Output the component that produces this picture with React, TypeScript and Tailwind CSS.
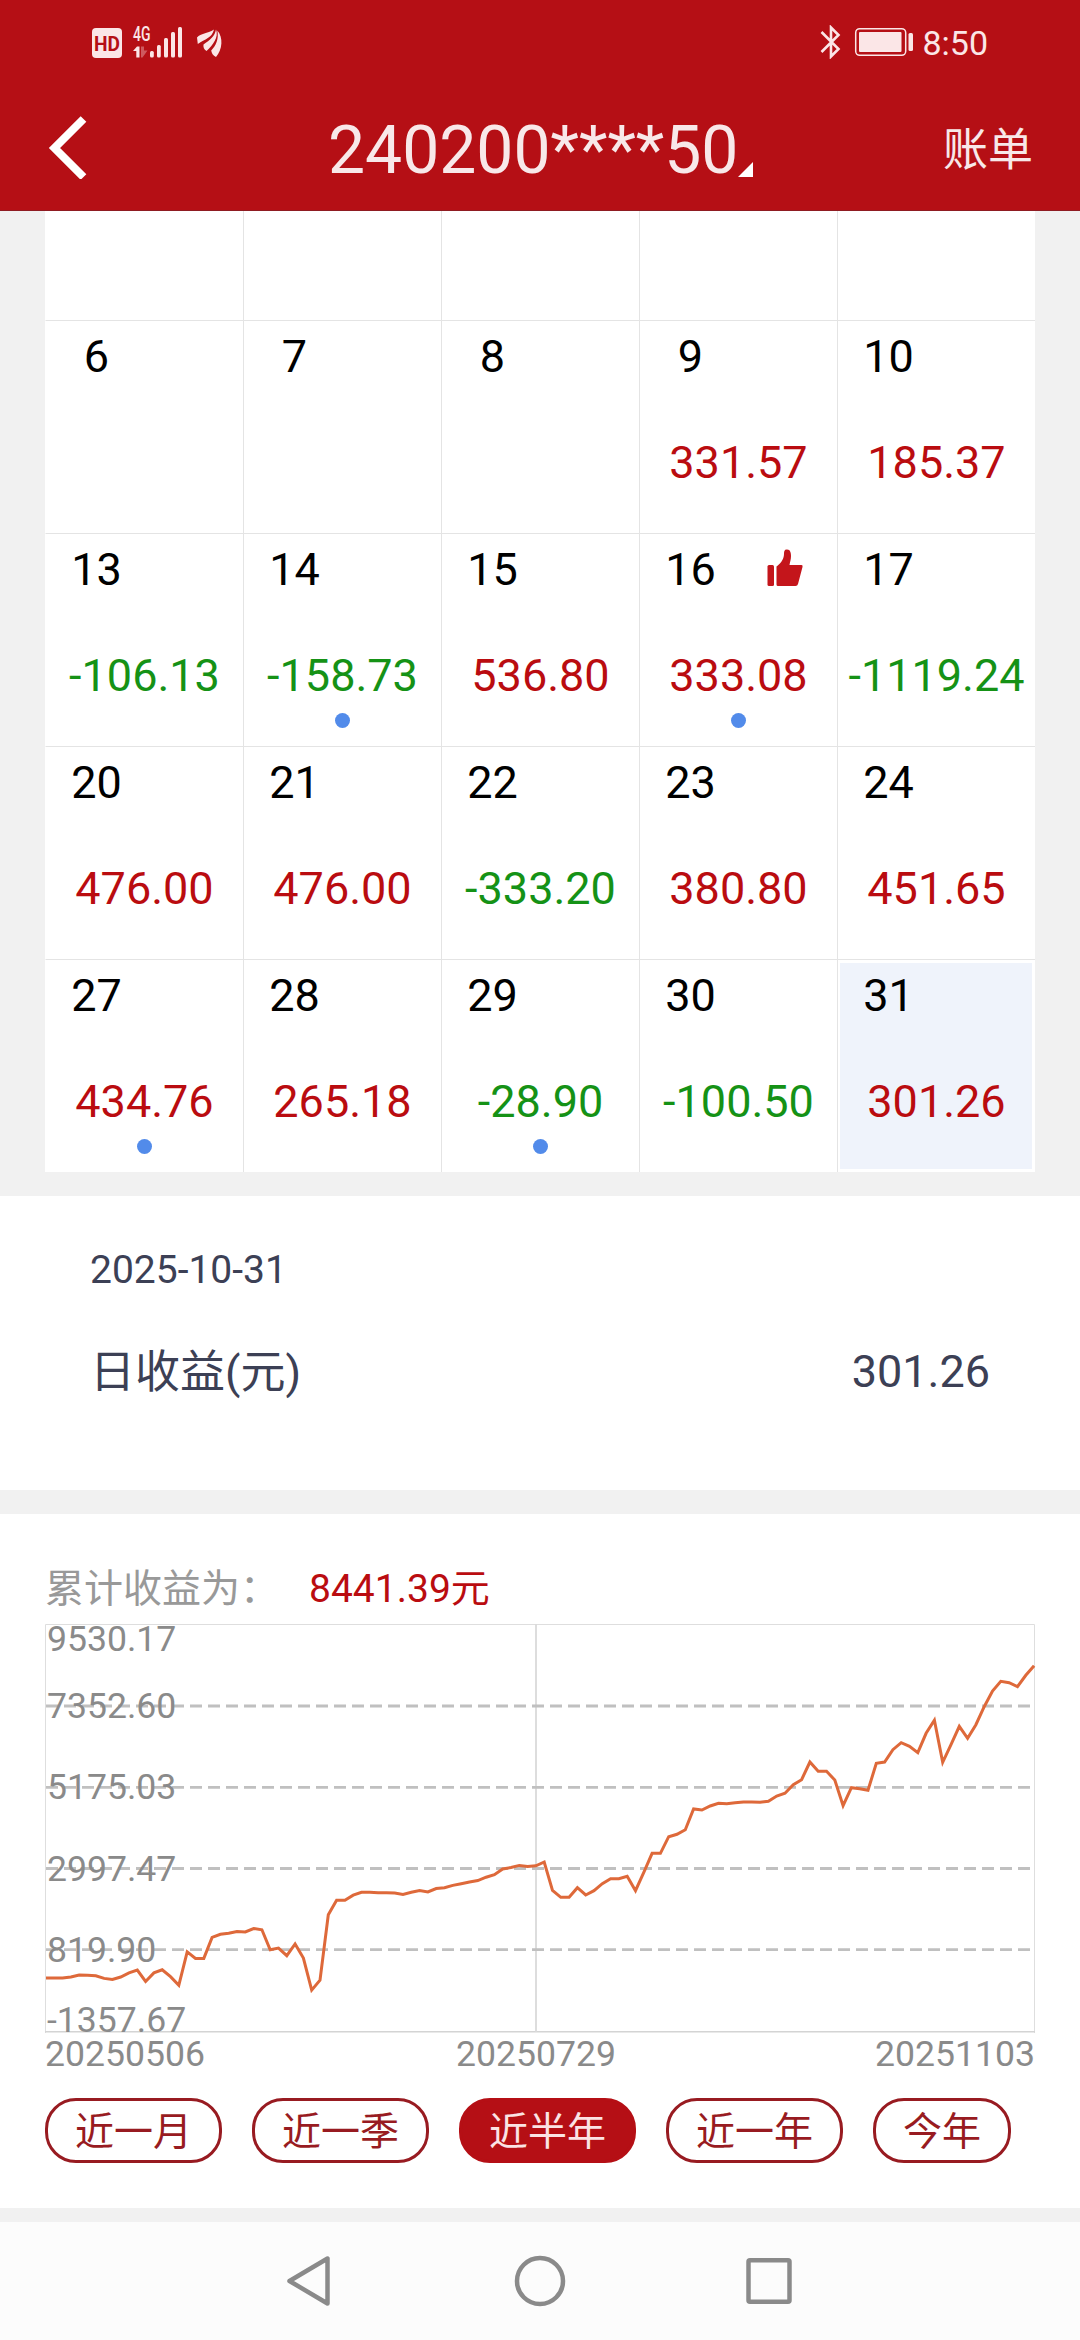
import React, { useState } from 'react';
import clsx from 'clsx';

interface Day {
  date: number;
  amount?: string;
  dot?: boolean;
  best?: boolean;
}

const days: Day[] = [
  { date: 6 },
  { date: 7 },
  { date: 8 },
  { date: 9, amount: '331.57' },
  { date: 10, amount: '185.37' },
  { date: 13, amount: '-106.13' },
  { date: 14, amount: '-158.73', dot: true },
  { date: 15, amount: '536.80' },
  { date: 16, amount: '333.08', dot: true, best: true },
  { date: 17, amount: '-1119.24' },
  { date: 20, amount: '476.00' },
  { date: 21, amount: '476.00' },
  { date: 22, amount: '-333.20' },
  { date: 23, amount: '380.80' },
  { date: 24, amount: '451.65' },
  { date: 27, amount: '434.76', dot: true },
  { date: 28, amount: '265.18' },
  { date: 29, amount: '-28.90', dot: true },
  { date: 30, amount: '-100.50' },
  { date: 31, amount: '301.26' },
];

const ranges = ['近一月', '近一季', '近半年', '近一年', '今年'];

// y position of each trading day on the chart, evenly spaced on x
const series = [
  354.1, 354.1, 354.1, 353, 351, 351.3, 351.7, 354.4, 355.4, 353, 348.9, 346.1, 357.5, 348.9, 345.8,
  352.7, 361.3, 327.9, 334.4, 334.4, 313.4, 310.3, 309.3, 307.6, 307.9, 304.5, 305.8, 325.8, 324.1,
  331.7, 320, 334.1, 366.1, 356.1, 290.7, 276.2, 276.2, 271.1, 268.3, 268.3, 268.7, 268.8, 269, 270.4,
  268.3, 266.6, 268, 264.5, 263.8, 261.4, 259.7, 258, 256.6, 253.2, 250.7, 244.9, 243.5, 241.4, 242.5,
  241.8, 238, 266.3, 273.3, 273.3, 263.7, 271, 266.7, 259.7, 254.7, 254.7, 252.3, 266.7, 248.3, 229.3,
  229.3, 212.7, 210.3, 205.7, 185, 186, 182, 179.3, 179.7, 178.8, 178, 178, 178.3, 177.3, 172, 169.3,
  160.7, 155.7, 138, 147.3, 147.3, 156, 181.7, 163.7, 164.7, 166.3, 139.3, 138, 125.7, 118.7, 122.3,
  128.7, 109.3, 96.3, 138.3, 120.7, 102.3, 114.3, 100.7, 82.7, 67, 57.3, 58.7, 62.7, 51.3, 41.7,
];

const axisLabels = [
  { text: '9530.17', y: 26.5 },
  { text: '7352.60', y: 93.5 },
  { text: '5175.03', y: 175 },
  { text: '2997.47', y: 256.5 },
  { text: '819.90', y: 337.5 },
  { text: '-1357.67', y: 407.5 },
];

const StatusBar: React.FC = () => (
  <div className="flex h-[84px] items-center justify-between px-[92px] text-[#fbe6e7]">
    <svg className="overflow-visible" width="132" height="34" viewBox="0 0 132 34" fill="currentColor">
      <rect x="0" y="3" width="30" height="30" rx="4" />
      <text x="15" y="25.500" fontSize="21" fontWeight="700" textAnchor="middle" textLength="26" lengthAdjust="spacingAndGlyphs" fill="#b50f15">HD</text>
      <text x="41" y="15.800" fontSize="20" fontWeight="500" textLength="17.500" lengthAdjust="spacingAndGlyphs">4G</text>
      <path d="M41 26L45 21.500H47.500V32.500H44.300V26Z" />
      <path d="M49 21.500H52V25.500H55.500L50.500 32.500H49Z" opacity="0.35" />
      <rect x="58" y="26" width="3.800" height="6.500" rx="1.500" />
      <rect x="65" y="20" width="3.800" height="12.500" rx="1.500" />
      <rect x="72" y="13" width="4" height="19.500" rx="1.500" />
      <rect x="79" y="7" width="4" height="25.500" rx="1.500" />
      <rect x="86" y="2" width="4" height="30.500" rx="1.500" />
      <path d="M105 12.500C109 8 115 9 122 4.500C120 13 113 14 105.800 19Z" />
      <path d="M111.500 19.500C118 15 123 11 124 4.500C127 12 121 20 114.500 26C112 24.500 111 22 111.500 19.500Z" />
      <path d="M125.300 5.500C131.500 12 130.500 25 124 32C121 30.500 119.500 28 119.200 25.500C124 20.500 127 14 125.300 5.500Z" />
    </svg>
    <div className="flex items-center">
      <svg width="94" height="34" viewBox="0 0 94 34" fill="none" stroke="currentColor">
        <path d="M1.500 7L18.500 24L11 31.500V2.500L18.500 10L1.500 27" strokeWidth="2.600" />
        <rect x="35.700" y="3.700" width="50" height="26.600" rx="4" strokeWidth="1.500" />
        <rect x="39" y="7" width="42.500" height="20" rx="1" fill="currentColor" stroke="none" />
        <rect x="88.500" y="8" width="4.500" height="18" rx="1.500" fill="currentColor" stroke="none" />
      </svg>
      <span className="ml-2 mt-0.5 text-[34px] leading-none">8:50</span>
    </div>
  </div>
);

const DayCell: React.FC<{ day: Day; first: boolean; selected: boolean; onSelect: () => void }> = ({
  day,
  first,
  selected,
  onSelect,
}) => (
  <div
    onClick={onSelect}
    className={clsx(
      'h-[213px] border-l border-t border-t-[#e4e4e4] bg-white pb-[3px] pl-[2px] pr-[3px] pt-[3px]',
      first ? 'border-l-white' : 'border-l-[#e4e4e4]'
    )}
  >
    <div className={clsx('flex h-full flex-col', selected && 'bg-[#eff3fb]')}>
      <div className="flex h-[60px] items-center pt-[6px]">
        <span className="w-[97px] text-center text-black">{day.date}</span>
        {day.best && (
          <svg className="mb-[6px] ml-[28px]" width="36" height="37" viewBox="0 0 36 37" fill="#c4151b">
            <rect x="0.500" y="16" width="6.500" height="21" rx="1.500" />
            <path d="M9.500 17.500C13 15 17 10.500 17 5C17 1 18.500 0.500 20 0.500C23.500 0.500 24 4 24 7C24 10.500 23 13 22.500 16H34.500Q36 16 35.500 18L31 35Q30.500 37 28.500 37H11Q9.500 37 9.500 35.500Z" />
          </svg>
        )}
      </div>
      <div
        className={clsx(
          'mt-[53px] h-[52px] pl-px text-center leading-[52px]',
          day.amount?.startsWith('-') ? 'text-[#159216]' : 'text-[#ba0c10]'
        )}
      >
        {day.amount}
      </div>
      {day.dot && <div className="mx-auto mt-[11px] h-[15px] w-[15px] rounded-full bg-[#528bea]" />}
    </div>
  </div>
);

const ProfitChart: React.FC = () => (
  <svg className="block overflow-visible" width="990" height="409" viewBox="0 0 990 409">
    <path d="M0.500 409V0.500H989.500V409" fill="none" stroke="#dedede" />
    <path d="M0 407.800H990" stroke="#d4d4d4" strokeWidth="1.500" />
    <path d="M491 0V408" stroke="#dadada" strokeWidth="1.800" />
    {[82, 163.3, 244.5, 325.6].map((y) => (
      <path key={y} d={`M1 ${y}H989`} stroke="#c0c0c0" strokeWidth="2.800" strokeDasharray="12 6" />
    ))}
    {axisLabels.map((label) => (
      <text key={label.text} x="2" y={label.y} fontSize="35.600" fill="#8a8a8a">
        {label.text}
      </text>
    ))}
    <polyline
      points={series.map((y, i) => `${(1 + i * 8.303).toFixed(1)},${y}`).join(' ')}
      fill="none"
      stroke="#de693a"
      strokeWidth="3"
    />
  </svg>
);

const App: React.FC = () => {
  const [selectedDate, setSelectedDate] = useState<number>(31);
  const [range, setRange] = useState<string>('近半年');

  const selected = days.find((day) => day.date === selectedDate);

  return (
    <div className="flex h-[2340px] w-[1080px] flex-col overflow-hidden bg-[#f1f1f1] font-[Roboto,'Noto_Sans_CJK_SC',sans-serif]">
      <header className="h-[211px] shrink-0 border-b border-[#8f1c22] bg-[#b50f15]">
        <StatusBar />
        <div className="flex h-[126px] items-center text-[#f8e8e9]">
          <div className="flex w-[328px] pl-[48px]">
            <svg width="40" height="64" viewBox="0 0 40 64" fill="none" stroke="#fff" strokeWidth="8">
              <path d="M35.500 4L6.500 33L35.500 62" />
            </svg>
          </div>
          <div className="flex items-end pt-[8px]">
            <span className="text-[66px] leading-[78px]">240200****50</span>
            <svg className="mb-[13px]" width="15" height="15" viewBox="0 0 15 15" fill="#fff">
              <path d="M15 0V15H0Z" />
            </svg>
          </div>
          <span className="ml-auto mr-[47px] pt-[6px] text-[45px] leading-none">账单</span>
        </div>
      </header>

      <section className="mx-[45px] shrink-0">
        <div className="grid h-[109px] grid-cols-5 bg-white">
          {[0, 1, 2, 3, 4].map((i) => (
            <div key={i} className={clsx('border-l', i === 0 ? 'border-white' : 'border-[#e4e4e4]')} />
          ))}
        </div>
        <div className="grid grid-cols-5 text-[45px] leading-[52px]">
          {days.map((day, index) => (
            <DayCell
              key={day.date}
              day={day}
              first={index % 5 === 0}
              selected={day.date === selectedDate}
              onSelect={() => setSelectedDate(day.date)}
            />
          ))}
        </div>
      </section>

      <section className="mt-6 h-[294px] shrink-0 bg-white px-[90px] pt-[50px] text-[#3c4055]">
        <p className="text-[39px] leading-[48px]">2025-10-{selectedDate}</p>
        <div className="mt-[46px] flex h-[64px] items-center justify-between text-[45px] leading-[64px]">
          <span className="pt-0.5">日收益(元)</span>
          <span>{selected?.amount}</span>
        </div>
      </section>

      <section className="mt-6 h-[694px] shrink-0 bg-white px-[45px] pt-[43px]">
        <div className="mb-[3px] flex h-[64px] items-center gap-[30px] text-[39px] leading-[56px]">
          <span className="text-[#999999]">累计收益为：</span>
          <span className="text-[#ba0c10]">8441.39元</span>
        </div>
        <ProfitChart />
        <div className="flex justify-between text-[35.6px] leading-[42px] text-[#8a8a8a]">
          <span>20250506</span>
          <span className="-ml-2">20250729</span>
          <span>20251103</span>
        </div>
        <div className="mt-[23px] flex gap-[30px]">
          {ranges.map((item) => (
            <button
              key={item}
              onClick={() => setRange(item)}
              className={clsx(
                'h-[65px] rounded-[31px] border-[3px] px-[27px] pt-[3px] text-[39px] leading-[56px]',
                item === range
                  ? 'border-[#b50f15] bg-[#b50f15] text-[#fbe3e4]'
                  : 'border-[#981b21] bg-white text-[#981b21]'
              )}
            >
              {item}
            </button>
          ))}
        </div>
      </section>

      <nav className="mt-auto flex h-[118px] shrink-0 items-center justify-center bg-[#fcfcfc]">
        <svg width="510" height="54" viewBox="0 0 510 54" fill="none" stroke="#8a8a8a" strokeWidth="4.500" strokeLinejoin="round">
          <path d="M42.500 4.500V49.500L4.500 27Z" />
          <circle cx="255" cy="27" r="23" />
          <rect x="463.500" y="6.300" width="41" height="41.400" rx="1.500" />
        </svg>
      </nav>
    </div>
  );
};

export default App;
